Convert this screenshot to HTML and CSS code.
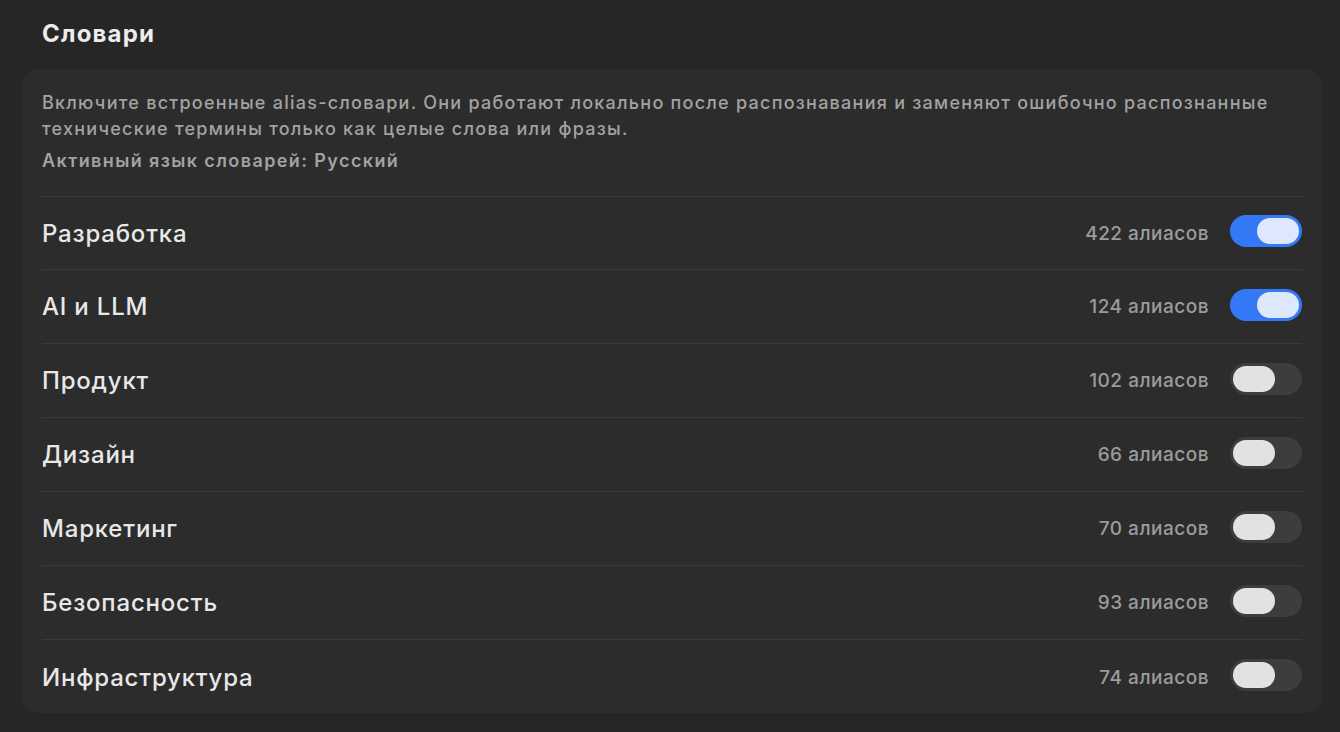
FILE: index.html
```html
<!DOCTYPE html>
<html lang="ru">
<head>
<meta charset="utf-8">
<title>Словари</title>
<link rel="stylesheet" href="styles.css">
</head>
<body>
<div class="page">
  <h1 class="title">Словари</h1>
  <section class="card">
    <div class="intro">
      <p class="desc">Включите встроенные alias-словари. Они работают локально после распознавания и заменяют ошибочно распознанные технические термины только как целые слова или фразы.</p>
      <p class="lang">Активный язык словарей: Русский</p>
    </div>
    <div class="row"><span class="name">Разработка</span><span class="count">422 алиасов</span><span class="toggle on"><span class="knob"></span></span></div>
    <div class="row"><span class="name">AI и LLM</span><span class="count">124 алиасов</span><span class="toggle on"><span class="knob"></span></span></div>
    <div class="row"><span class="name">Продукт</span><span class="count">102 алиасов</span><span class="toggle"><span class="knob"></span></span></div>
    <div class="row"><span class="name">Дизайн</span><span class="count">66 алиасов</span><span class="toggle"><span class="knob"></span></span></div>
    <div class="row"><span class="name">Маркетинг</span><span class="count">70 алиасов</span><span class="toggle"><span class="knob"></span></span></div>
    <div class="row"><span class="name">Безопасность</span><span class="count">93 алиасов</span><span class="toggle"><span class="knob"></span></span></div>
    <div class="row"><span class="name">Инфраструктура</span><span class="count">74 алиасов</span><span class="toggle"><span class="knob"></span></span></div>
  </section>
</div>
</body>
</html>
```

FILE: styles.css
```css
* { box-sizing: border-box; }
html, body {
  margin: 0;
  padding: 0;
  background: #262626;
  font-family: Inter, "Noto Sans", sans-serif;
  -webkit-font-smoothing: antialiased;
}
.page {
  width: 1340px;
  height: 732px;
  padding: 18px 18px 0 22px;
  overflow: hidden;
}
.title {
  margin: 0 0 19px 20px;
  font-size: 24px;
  line-height: 32px;
  font-weight: 700;
  color: #ececec;
  letter-spacing: 1.2px;
}
.card {
  background: #2c2c2c;
  border-radius: 16px;
  padding: 21px 20px 0 20px;
  width: 1300px;
  height: 644px;
}
.intro {
  padding-bottom: 23px;
  border-bottom: 1px solid #3a3a3a;
}
.desc {
  margin: 0;
  font-size: 18px;
  line-height: 26px;
  color: #a2a2a2;
  font-weight: 500;
  letter-spacing: 1.25px;
}
.lang {
  margin: 7px 0 0 0;
  font-size: 18px;
  line-height: 24px;
  color: #a2a2a2;
  font-weight: 600;
  letter-spacing: 1.4px;
}
.row {
  display: flex;
  align-items: center;
  height: 74px;
  border-bottom: 1px solid #3a3a3a;
}
.intro + .row { height: 73px; }
.row:last-child { border-bottom: none; }
.name {
  flex: 1;
  font-size: 24px;
  color: #e8e8e8;
  font-weight: 500;
  letter-spacing: 0.8px;
}
.count {
  font-size: 19px;
  color: #9c9c9c;
  font-weight: 500;
  letter-spacing: 0.5px;
  margin-right: 21px;
}
.toggle {
  width: 72px;
  height: 32px;
  border-radius: 16px;
  background: #3d3d3d;
  padding: 3px;
  display: flex;
  margin-bottom: 4px;
}
.knob {
  width: 42px;
  height: 26px;
  border-radius: 13px;
  background: #e2e2e2;
}
.toggle.on {
  background: #3478f6;
  justify-content: flex-end;
}
.toggle.on .knob { background: #dde8fc; }
```
